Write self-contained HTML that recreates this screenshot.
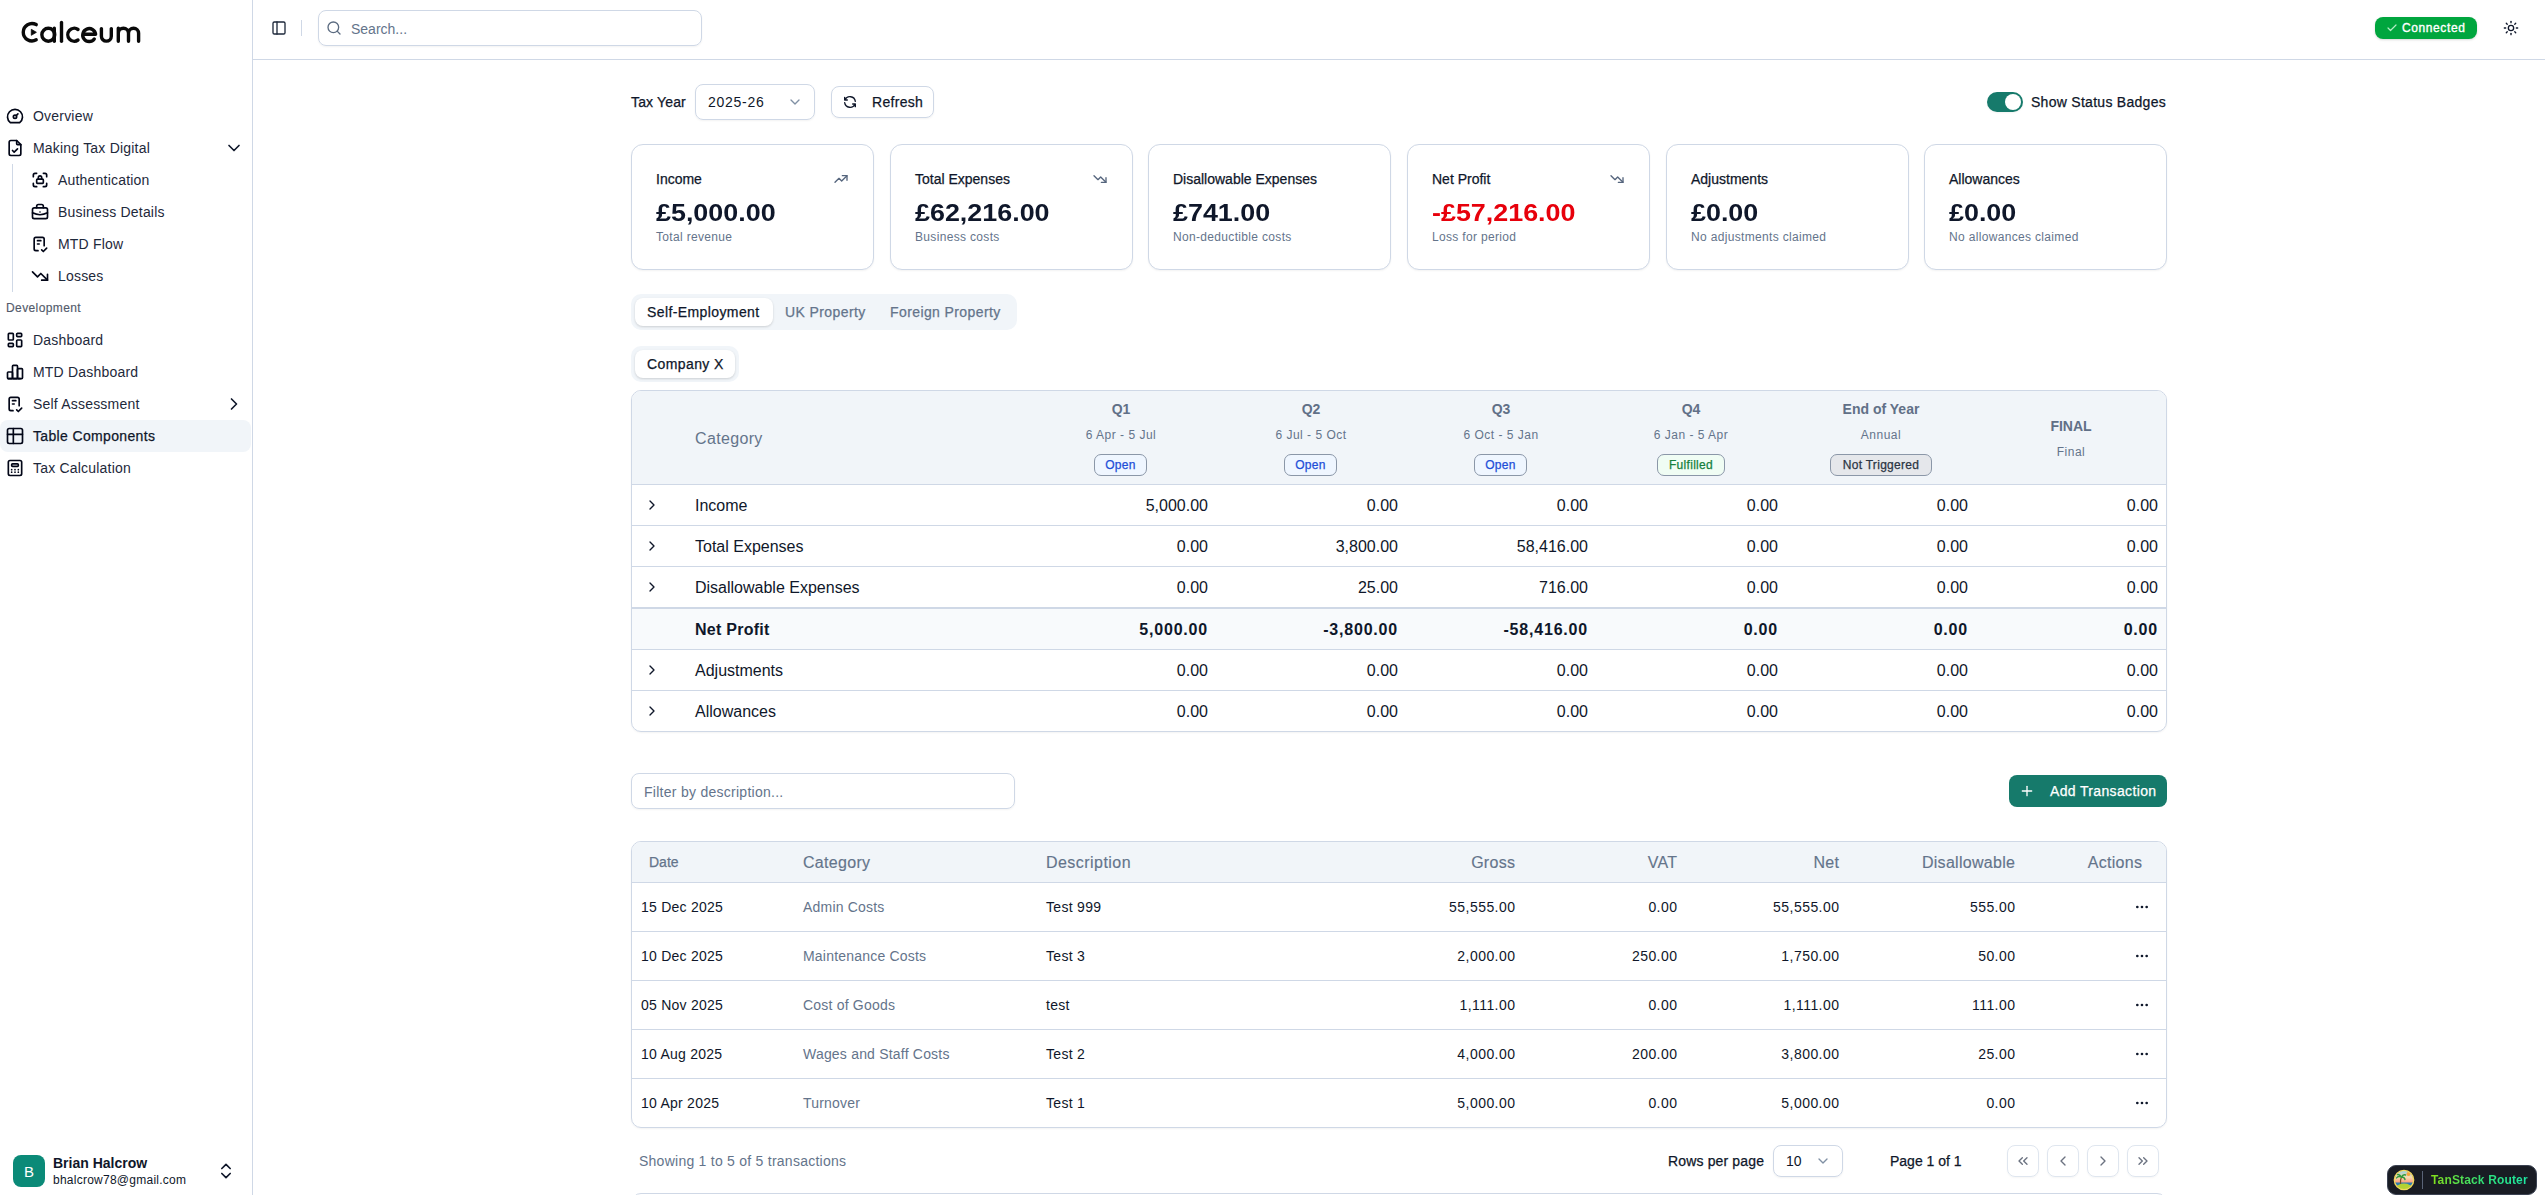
<!DOCTYPE html>
<html><head><meta charset="utf-8"><style>
*{box-sizing:border-box;margin:0;padding:0}
html,body{width:2545px;height:1195px;overflow:hidden;background:#fff;font-family:"Liberation Sans",sans-serif;color:#0f172a}
.abs{position:absolute}
svg{display:block;overflow:visible}
.ic{fill:none;stroke:currentColor;stroke-width:2;stroke-linecap:round;stroke-linejoin:round}
.nw{white-space:nowrap}
.trow .n{letter-spacing:.45px;margin-right:-.45px}
.m{-webkit-text-stroke:.25px currentColor}
.m2{-webkit-text-stroke:.15px currentColor}
#sb{position:absolute;left:0;top:0;width:253px;height:1195px;border-right:1px solid #cfd8e6;background:#fff}
.nav{position:absolute;left:0;width:251px;height:32px;font-size:14px;line-height:32px;color:#1e293b}
.nav .i{position:absolute;left:5px;top:6px;width:20px;height:20px;color:#020617}
.nav .t{position:absolute;left:33px;top:0;letter-spacing:.2px;white-space:nowrap}
.nav.act .t{-webkit-text-stroke:.25px currentColor;letter-spacing:.35px;color:#0f172a}
.sub .i{left:30px}
.sub .t{left:58px}
.nav.act{background:#f1f5f9;border-radius:8px}
#hdr{position:absolute;left:253px;top:0;right:0;height:60px;border-bottom:1px solid #cfd8e6}
.muted{color:#64748b}
.card{position:absolute;top:144px;width:243px;height:126px;border:1px solid #cfd8e6;border-radius:12px;box-shadow:0 1px 2px rgba(0,0,0,.05);background:#fff}
.card .ttl{position:absolute;left:24px;top:24px;font-size:14px;line-height:20px;-webkit-text-stroke:.25px currentColor}
.card .val{position:absolute;left:24px;top:52px;font-size:24px;line-height:32px;font-weight:700;transform:scaleX(1.12);transform-origin:0 0}
.card .sub2{position:absolute;left:24px;top:84px;font-size:12px;line-height:16px;color:#64748b;letter-spacing:.33px}
.card .ar{position:absolute;left:201px;top:26px;width:16px;height:16px;color:#55657d}
.tabs{position:absolute;background:#f1f5f9;border-radius:10px}
.tab{position:absolute;top:4px;height:28px;font-size:14px;line-height:28px;color:#64748b;white-space:nowrap;letter-spacing:.4px;-webkit-text-stroke:.25px currentColor}
.tab.on{background:#fff;color:#0f172a;border-radius:8px;box-shadow:0 1px 3px rgba(0,0,0,.1),0 1px 2px rgba(0,0,0,.06)}
#st{position:absolute;left:631px;top:390px;width:1536px;height:342px;border:1px solid #cfd8e6;border-radius:10px;overflow:hidden;box-shadow:0 1px 2px rgba(0,0,0,.05)}
#st .hd{position:absolute;left:0;top:0;width:100%;height:94px;background:#f1f5f9;border-bottom:1px solid #cfd8e6}
.qh{position:absolute;top:0;width:190px;height:93px;text-align:center;color:#617087}
.qh .q{position:absolute;left:0;width:190px;top:8px;font-size:14px;line-height:20px;font-weight:700}
.qh .d{position:absolute;left:0;width:190px;top:36px;font-size:12px;line-height:16px;letter-spacing:.5px;color:#64748b}
.bdg{position:absolute;top:63px;height:22px;border:1px solid #8b97a8;border-radius:7px;font-size:12px;line-height:20px;font-weight:400;-webkit-text-stroke:.25px currentColor;text-align:center;letter-spacing:.3px}
.row{position:absolute;left:0;width:100%;height:41px;border-bottom:1px solid #cfd8e6;font-size:16px;line-height:40px}
.row .c{position:absolute;left:63px;top:1px;white-space:nowrap}
.row .v{position:absolute;top:1px;width:190px;text-align:right;padding-right:8px}
.row .chev{position:absolute;left:12px;top:12px;width:16px;height:16px;color:#0f172a}
#tt{position:absolute;left:631px;top:841px;width:1536px;height:287px;border:1px solid #cfd8e6;border-radius:10px;overflow:hidden;box-shadow:0 1px 2px rgba(0,0,0,.05)}
#tt .hd{position:absolute;left:0;top:0;width:100%;height:41px;background:#f1f5f9;border-bottom:1px solid #cfd8e6;color:#64748b;font-size:16px;line-height:41px;-webkit-text-stroke:.15px currentColor}
.trow{position:absolute;left:0;width:100%;height:49px;border-bottom:1px solid #cfd8e6;font-size:14px;line-height:48px}
.trow div,#tt .hd div{position:absolute;top:0;white-space:nowrap}
.pbtn{position:absolute;top:1145px;width:32px;height:32px;border:1px solid #dfe6ef;border-radius:8px;box-shadow:0 1px 2px rgba(0,0,0,.04);color:#64748b}
</style></head><body>
<div id="sb">
<svg class="abs" style="left:0;top:0" width="160" height="60" viewBox="0 0 160 60">
<g fill="none" stroke="#0a0a0a" stroke-width="3.4" stroke-linecap="round" stroke-linejoin="round">
<path d="M36.2 24.6 A8.7 8.7 0 1 0 36.2 39.8"/>
<circle cx="48.3" cy="34.75" r="6.45"/>
<path d="M54.3 28.3V41.2"/>
<path d="M61.5 22.4V41.2"/>
<path d="M78 29.5 A6.45 6.45 0 1 0 78 40"/>
<path d="M83.1 34.3H95.6 A6.45 6.45 0 1 0 94.3 39"/>
<path d="M101.4 28.6V36.2 A4.95 4.95 0 0 0 111.3 36.2V28.6"/>
<path d="M118.3 41.2V28.3 M118.3 33.3 A5.1 5.1 0 0 1 128.5 33.3V41.2 M128.5 33.3 A5.05 5.05 0 0 1 138.6 33.3V41.2"/>
</g>
<path d="M31.3 29.3 L36.4 32.3 L31.3 35.3Z" fill="#0a0a0a" stroke="#0a0a0a" stroke-width="0.8" stroke-linejoin="round"/>
</svg>
<div class="nav " style="top:100px"><div class="i"><svg width="100%" height="100%" viewBox="0 0 24 24" class="ic" style="stroke-width:2"><path d="M12 13m-2 0a2 2 0 1 0 4 0a2 2 0 1 0 -4 0"/><path d="M13.45 11.55l2.05 -2.05"/><path d="M6.4 20a9 9 0 1 1 11.2 0z"/></svg></div><div class="t">Overview</div></div>
<div class="nav " style="top:132px"><div class="i"><svg width="100%" height="100%" viewBox="0 0 24 24" class="ic" style="stroke-width:2"><path d="M14 3v4a1 1 0 0 0 1 1h4"/><path d="M17 21h-10a2 2 0 0 1 -2 -2v-14a2 2 0 0 1 2 -2h7l5 5v11a2 2 0 0 1 -2 2z"/><path d="M9 15l2 2l4 -4"/></svg></div><div class="t">Making Tax Digital</div></div>
<div class="nav sub" style="top:164px"><div class="i"><svg width="100%" height="100%" viewBox="0 0 24 24" class="ic" style="stroke-width:2"><path d="M4 8v-2a2 2 0 0 1 2 -2h2"/><path d="M4 16v2a2 2 0 0 0 2 2h2"/><path d="M16 4h2a2 2 0 0 1 2 2v2"/><path d="M16 20h2a2 2 0 0 0 2 -2v-2"/><path d="M8 12a1 1 0 0 1 1 -1h6a1 1 0 0 1 1 1v3a1 1 0 0 1 -1 1h-6a1 1 0 0 1 -1 -1z"/><path d="M10 11v-2a2 2 0 1 1 4 0v2"/></svg></div><div class="t">Authentication</div></div>
<div class="nav sub" style="top:196px"><div class="i"><svg width="100%" height="100%" viewBox="0 0 24 24" class="ic" style="stroke-width:2"><path d="M3 9a2 2 0 0 1 2 -2h14a2 2 0 0 1 2 2v9a2 2 0 0 1 -2 2h-14a2 2 0 0 1 -2 -2z"/><path d="M8 7v-2a2 2 0 0 1 2 -2h4a2 2 0 0 1 2 2v2"/><path d="M12 12l0 .01"/><path d="M3 13a20 20 0 0 0 18 0"/></svg></div><div class="t">Business Details</div></div>
<div class="nav sub" style="top:228px"><div class="i"><svg width="100%" height="100%" viewBox="0 0 24 24" class="ic" style="stroke-width:2"><path d="M9.615 20h-2.615a2 2 0 0 1 -2 -2v-12a2 2 0 0 1 2 -2h8a2 2 0 0 1 2 2v8"/><path d="M14 19l2 2l4 -4"/><path d="M9 8h4"/><path d="M9 12h2"/></svg></div><div class="t">MTD Flow</div></div>
<div class="nav sub" style="top:260px"><div class="i"><svg width="100%" height="100%" viewBox="0 0 24 24" class="ic" style="stroke-width:2"><path d="M3 7l6 6l4 -4l8 8"/><path d="M21 10l0 7l-7 0"/></svg></div><div class="t">Losses</div></div>
<div class="nav " style="top:324px"><div class="i"><svg width="100%" height="100%" viewBox="0 0 24 24" class="ic" style="stroke-width:2"><path d="M5 4h4a1 1 0 0 1 1 1v6a1 1 0 0 1 -1 1h-4a1 1 0 0 1 -1 -1v-6a1 1 0 0 1 1 -1"/><path d="M5 16h4a1 1 0 0 1 1 1v2a1 1 0 0 1 -1 1h-4a1 1 0 0 1 -1 -1v-2a1 1 0 0 1 1 -1"/><path d="M15 12h4a1 1 0 0 1 1 1v6a1 1 0 0 1 -1 1h-4a1 1 0 0 1 -1 -1v-6a1 1 0 0 1 1 -1"/><path d="M15 4h4a1 1 0 0 1 1 1v2a1 1 0 0 1 -1 1h-4a1 1 0 0 1 -1 -1v-2a1 1 0 0 1 1 -1"/></svg></div><div class="t">Dashboard</div></div>
<div class="nav " style="top:356px"><div class="i"><svg width="100%" height="100%" viewBox="0 0 24 24" class="ic" style="stroke-width:2"><path d="M3 13a1 1 0 0 1 1 -1h4a1 1 0 0 1 1 1v6a1 1 0 0 1 -1 1h-4a1 1 0 0 1 -1 -1z"/><path d="M15 9a1 1 0 0 1 1 -1h4a1 1 0 0 1 1 1v10a1 1 0 0 1 -1 1h-4a1 1 0 0 1 -1 -1z"/><path d="M9 5a1 1 0 0 1 1 -1h4a1 1 0 0 1 1 1v14a1 1 0 0 1 -1 1h-4a1 1 0 0 1 -1 -1z"/><path d="M4 20h14"/></svg></div><div class="t">MTD Dashboard</div></div>
<div class="nav " style="top:388px"><div class="i"><svg width="100%" height="100%" viewBox="0 0 24 24" class="ic" style="stroke-width:2"><path d="M9.615 20h-2.615a2 2 0 0 1 -2 -2v-12a2 2 0 0 1 2 -2h8a2 2 0 0 1 2 2v8"/><path d="M14 19l2 2l4 -4"/><path d="M9 8h4"/><path d="M9 12h2"/></svg></div><div class="t">Self Assessment</div></div>
<div class="nav act" style="top:420px"><div class="i"><svg width="100%" height="100%" viewBox="0 0 24 24" class="ic" style="stroke-width:2"><path d="M3 5a2 2 0 0 1 2 -2h14a2 2 0 0 1 2 2v14a2 2 0 0 1 -2 2h-14a2 2 0 0 1 -2 -2v-14z"/><path d="M3 10h18"/><path d="M10 3v18"/></svg></div><div class="t">Table Components</div></div>
<div class="nav " style="top:452px"><div class="i"><svg width="100%" height="100%" viewBox="0 0 24 24" class="ic" style="stroke-width:2"><path d="M4 5a2 2 0 0 1 2 -2h12a2 2 0 0 1 2 2v14a2 2 0 0 1 -2 2h-12a2 2 0 0 1 -2 -2z"/><path d="M8 8a1 1 0 0 1 1 -1h6a1 1 0 0 1 1 1v1a1 1 0 0 1 -1 1h-6a1 1 0 0 1 -1 -1z"/><path d="M8 14l0 .01"/><path d="M12 14l0 .01"/><path d="M16 14l0 .01"/><path d="M8 17l0 .01"/><path d="M12 17l0 .01"/><path d="M16 17l0 .01"/></svg></div><div class="t">Tax Calculation</div></div>
<div class="abs nw m2" style="left:6px;top:300px;font-size:12px;line-height:16px;letter-spacing:.4px;color:#535b6b">Development</div>
<div class="abs" style="left:12px;top:164px;width:1px;height:128px;background:#cfd8e6"></div>
<div class="abs" style="left:224px;top:138px;width:20px;height:20px;color:#0f172a"><svg width="100%" height="100%" viewBox="0 0 24 24" class="ic" style="stroke-width:2"><path d="m6 9 6 6 6-6"/></svg></div>
<div class="abs" style="left:224px;top:394px;width:20px;height:20px;color:#0f172a"><svg width="100%" height="100%" viewBox="0 0 24 24" class="ic" style="stroke-width:2"><path d="m9 18 6-6-6-6"/></svg></div>
<div class="abs" style="left:13px;top:1155px;width:32px;height:32px;border-radius:8px;background:#0b8a78;color:#fff;font-size:15px;line-height:34px;text-align:center">B</div>
<div class="abs nw" style="left:53px;top:1153px;font-size:14px;line-height:20px;font-weight:700">Brian Halcrow</div>
<div class="abs nw" style="left:53px;top:1172px;font-size:12px;line-height:16px;letter-spacing:.25px">bhalcrow78@gmail.com</div>
<div class="abs" style="left:216px;top:1161px;width:20px;height:20px;color:#0f172a"><svg width="100%" height="100%" viewBox="0 0 24 24" class="ic" style="stroke-width:2"><path d="m7 15 5 5 5-5"/><path d="m7 9 5-5 5 5"/></svg></div>
</div>
<div id="hdr"></div>
<div class="abs" style="left:271px;top:20px;width:16px;height:16px;color:#1e293b"><svg width="100%" height="100%" viewBox="0 0 24 24" class="ic" style="stroke-width:2"><rect width="18" height="18" x="3" y="3" rx="2"/><path d="M9 3v18"/></svg></div>
<div class="abs" style="left:301px;top:20px;width:1px;height:16px;background:#cfd8e6"></div>
<div class="abs" style="left:318px;top:10px;width:384px;height:36px;border:1px solid #cfd8e6;border-radius:8px;box-shadow:0 1px 2px rgba(0,0,0,.05)"></div>
<div class="abs" style="left:326px;top:20px;width:16px;height:16px;color:#5b6b80"><svg width="100%" height="100%" viewBox="0 0 24 24" class="ic" style="stroke-width:2"><circle cx="11" cy="11" r="8"/><path d="m21 21-4.3-4.3"/></svg></div>
<div class="abs muted nw" style="left:351px;top:19px;font-size:14px;line-height:20px">Search...</div>
<div class="abs" style="left:2375px;top:17px;width:102px;height:22px;border-radius:8px;background:#00a63e;box-shadow:0 1px 3px rgba(0,0,0,.1),0 1px 2px rgba(0,0,0,.06);color:#fff;font-size:12px;line-height:22px;font-weight:400;-webkit-text-stroke:.35px currentColor;padding-left:27px;letter-spacing:.6px">Connected</div>
<div class="abs" style="left:2386px;top:22px;width:12px;height:12px;color:#b5ebc6"><svg width="100%" height="100%" viewBox="0 0 24 24" class="ic" style="stroke-width:2.4"><path d="M20 6 9 17l-5-5"/></svg></div>
<div class="abs" style="left:2503px;top:20px;width:16px;height:16px;color:#0f172a"><svg width="100%" height="100%" viewBox="0 0 24 24" class="ic" style="stroke-width:2"><circle cx="12" cy="12" r="4"/><path d="M12 2v2"/><path d="M12 20v2"/><path d="m4.93 4.93 1.41 1.41"/><path d="m17.66 17.66 1.41 1.41"/><path d="M2 12h2"/><path d="M20 12h2"/><path d="m6.34 17.66-1.41 1.41"/><path d="m19.07 4.93-1.41 1.41"/></svg></div>
<div class="abs nw m" style="left:631px;top:92px;font-size:14px;line-height:20px;letter-spacing:.15px">Tax Year</div>
<div class="abs" style="left:695px;top:84px;width:120px;height:36px;border:1px solid #cfd8e6;border-radius:8px;box-shadow:0 1px 2px rgba(0,0,0,.05);font-size:14px;line-height:34px;padding-left:12px;letter-spacing:.72px">2025-26</div>
<div class="abs" style="left:787px;top:94px;width:16px;height:16px;color:#8090a4"><svg width="100%" height="100%" viewBox="0 0 24 24" class="ic" style="stroke-width:2"><path d="m6 9 6 6 6-6"/></svg></div>
<div class="abs" style="left:831px;top:86px;width:103px;height:32px;border:1px solid #cfd8e6;border-radius:8px;box-shadow:0 1px 2px rgba(0,0,0,.05);font-size:14px;line-height:30px;padding-left:40px;letter-spacing:.3px;-webkit-text-stroke:.25px currentColor">Refresh</div>
<div class="abs" style="left:842px;top:94px;width:16px;height:16px;color:#0f172a"><svg width="100%" height="100%" viewBox="0 0 24 24" class="ic" style="stroke-width:2"><path d="M20 11a8.1 8.1 0 0 0 -15.5 -2m-.5 -4v4h4"/><path d="M4 13a8.1 8.1 0 0 0 15.5 2m.5 4v-4h-4"/></svg></div>
<div class="abs" style="left:1987px;top:92px;width:36px;height:20px;border-radius:10px;background:#167a6b;box-shadow:0 1px 2px rgba(0,0,0,.05)"><div class="abs" style="left:18px;top:2px;width:16px;height:16px;border-radius:8px;background:#fff"></div></div>
<div class="abs nw m" style="left:2031px;top:92px;font-size:14px;line-height:20px;letter-spacing:.28px">Show Status Badges</div>
<div class="card" style="left:631px"><div class="ttl nw">Income</div><div class="val nw">£5,000.00</div><div class="sub2 nw">Total revenue</div><div class="ar"><svg width="100%" height="100%" viewBox="0 0 24 24" class="ic" style="stroke-width:2"><path d="M3 17l6 -6l4 4l8 -8"/><path d="M14 7l7 0l0 7"/></svg></div></div>
<div class="card" style="left:890px"><div class="ttl nw">Total Expenses</div><div class="val nw">£62,216.00</div><div class="sub2 nw">Business costs</div><div class="ar"><svg width="100%" height="100%" viewBox="0 0 24 24" class="ic" style="stroke-width:2"><path d="M3 7l6 6l4 -4l8 8"/><path d="M21 10l0 7l-7 0"/></svg></div></div>
<div class="card" style="left:1148px"><div class="ttl nw">Disallowable Expenses</div><div class="val nw">£741.00</div><div class="sub2 nw">Non-deductible costs</div></div>
<div class="card" style="left:1407px"><div class="ttl nw">Net Profit</div><div class="val nw" style="color:#e7000b">-£57,216.00</div><div class="sub2 nw">Loss for period</div><div class="ar"><svg width="100%" height="100%" viewBox="0 0 24 24" class="ic" style="stroke-width:2"><path d="M3 7l6 6l4 -4l8 8"/><path d="M21 10l0 7l-7 0"/></svg></div></div>
<div class="card" style="left:1666px"><div class="ttl nw">Adjustments</div><div class="val nw">£0.00</div><div class="sub2 nw">No adjustments claimed</div></div>
<div class="card" style="left:1924px"><div class="ttl nw">Allowances</div><div class="val nw">£0.00</div><div class="sub2 nw">No allowances claimed</div></div>
<div class="tabs" style="left:631px;top:294px;width:386px;height:36px">
<div class="tab on" style="left:4px;width:138px;padding-left:12px">Self-Employment</div>
<div class="tab" style="left:154px">UK Property</div>
<div class="tab" style="left:259px">Foreign Property</div>
</div>
<div class="tabs" style="left:631px;top:346px;width:108px;height:36px">
<div class="tab on" style="left:4px;width:100px;padding-left:12px">Company X</div>
</div>
<div id="st"><div class="hd">
<div class="abs" style="left:63px;top:38px;font-size:16px;line-height:20px;color:#64748b;letter-spacing:.35px">Category</div>
<div class="qh" style="left:394px"><div class="q">Q1</div><div class="d">6 Apr - 5 Jul</div><div class="bdg" style="left:68px;width:53px;background:#eff6ff;color:#1d4ed8">Open</div></div>
<div class="qh" style="left:584px"><div class="q">Q2</div><div class="d">6 Jul - 5 Oct</div><div class="bdg" style="left:68px;width:53px;background:#eff6ff;color:#1d4ed8">Open</div></div>
<div class="qh" style="left:774px"><div class="q">Q3</div><div class="d">6 Oct - 5 Jan</div><div class="bdg" style="left:68px;width:53px;background:#eff6ff;color:#1d4ed8">Open</div></div>
<div class="qh" style="left:964px"><div class="q">Q4</div><div class="d">6 Jan - 5 Apr</div><div class="bdg" style="left:61px;width:68px;background:#f0fdf4;color:#15803d">Fulfilled</div></div>
<div class="qh" style="left:1154px"><div class="q">End of Year</div><div class="d">Annual</div><div class="bdg" style="left:44px;width:102px;background:#e5e7eb;color:#2b3544">Not Triggered</div></div>
<div class="qh" style="left:1344px"><div class="q" style="top:25px">FINAL</div><div class="d" style="top:53px">Final</div></div>
</div>
<div class="row" style="top:94px">
<div class="chev"><svg width="100%" height="100%" viewBox="0 0 24 24" class="ic" style="stroke-width:2"><path d="m9 18 6-6-6-6"/></svg></div><div class="c">Income</div>
<div class="v" style="left:394px">5,000.00</div>
<div class="v" style="left:584px">0.00</div>
<div class="v" style="left:774px">0.00</div>
<div class="v" style="left:964px">0.00</div>
<div class="v" style="left:1154px">0.00</div>
<div class="v" style="left:1344px">0.00</div>
</div>
<div class="row" style="top:135px">
<div class="chev"><svg width="100%" height="100%" viewBox="0 0 24 24" class="ic" style="stroke-width:2"><path d="m9 18 6-6-6-6"/></svg></div><div class="c">Total Expenses</div>
<div class="v" style="left:394px">0.00</div>
<div class="v" style="left:584px">3,800.00</div>
<div class="v" style="left:774px">58,416.00</div>
<div class="v" style="left:964px">0.00</div>
<div class="v" style="left:1154px">0.00</div>
<div class="v" style="left:1344px">0.00</div>
</div>
<div class="row" style="top:176px">
<div class="chev"><svg width="100%" height="100%" viewBox="0 0 24 24" class="ic" style="stroke-width:2"><path d="m9 18 6-6-6-6"/></svg></div><div class="c">Disallowable Expenses</div>
<div class="v" style="left:394px">0.00</div>
<div class="v" style="left:584px">25.00</div>
<div class="v" style="left:774px">716.00</div>
<div class="v" style="left:964px">0.00</div>
<div class="v" style="left:1154px">0.00</div>
<div class="v" style="left:1344px">0.00</div>
</div>
<div class="row" style="top:217px;height:42px;background:#f8fafc;font-weight:700;border-top:1px solid #cfd8e6">
<div class="c" style="letter-spacing:.25px">Net Profit</div>
<div class="v" style="left:394px;letter-spacing:.8px">5,000.00</div>
<div class="v" style="left:584px;letter-spacing:.8px">-3,800.00</div>
<div class="v" style="left:774px;letter-spacing:.8px">-58,416.00</div>
<div class="v" style="left:964px;letter-spacing:.8px">0.00</div>
<div class="v" style="left:1154px;letter-spacing:.8px">0.00</div>
<div class="v" style="left:1344px;letter-spacing:.8px">0.00</div>
</div>
<div class="row" style="top:259px">
<div class="chev"><svg width="100%" height="100%" viewBox="0 0 24 24" class="ic" style="stroke-width:2"><path d="m9 18 6-6-6-6"/></svg></div><div class="c">Adjustments</div>
<div class="v" style="left:394px">0.00</div>
<div class="v" style="left:584px">0.00</div>
<div class="v" style="left:774px">0.00</div>
<div class="v" style="left:964px">0.00</div>
<div class="v" style="left:1154px">0.00</div>
<div class="v" style="left:1344px">0.00</div>
</div>
<div class="row" style="top:300px">
<div class="chev"><svg width="100%" height="100%" viewBox="0 0 24 24" class="ic" style="stroke-width:2"><path d="m9 18 6-6-6-6"/></svg></div><div class="c">Allowances</div>
<div class="v" style="left:394px">0.00</div>
<div class="v" style="left:584px">0.00</div>
<div class="v" style="left:774px">0.00</div>
<div class="v" style="left:964px">0.00</div>
<div class="v" style="left:1154px">0.00</div>
<div class="v" style="left:1344px">0.00</div>
</div>
</div>
<div class="abs" style="left:631px;top:773px;width:384px;height:36px;border:1px solid #cfd8e6;border-radius:8px;box-shadow:0 1px 2px rgba(0,0,0,.05);font-size:14px;line-height:34px;padding:1px 0 0 12px;color:#64748b;letter-spacing:.27px">Filter by description...</div>
<div class="abs" style="left:2009px;top:775px;width:158px;height:32px;border-radius:8px;background:#167a6b;color:#fff;font-size:14px;line-height:32px;padding-left:41px;letter-spacing:.35px;-webkit-text-stroke:.25px currentColor">Add Transaction</div>
<div class="abs" style="left:2019px;top:783px;width:16px;height:16px;color:#fff"><svg width="100%" height="100%" viewBox="0 0 24 24" class="ic" style="stroke-width:2"><path d="M5 12h14"/><path d="M12 5v14"/></svg></div>
<div id="tt"><div class="hd">
<div class="m" style="left:17px;font-size:14px">Date</div>
<div style="left:171px;letter-spacing:.3px">Category</div>
<div style="left:414px;letter-spacing:.45px">Description</div>
<div style="right:651px;letter-spacing:.3px;margin-right:-.3px">Gross</div>
<div style="right:489px;letter-spacing:.3px;margin-right:-.3px">VAT</div>
<div style="right:327px;letter-spacing:.3px;margin-right:-.3px">Net</div>
<div style="right:151px;letter-spacing:.3px;margin-right:-.3px">Disallowable</div>
<div style="right:24px;letter-spacing:.3px;margin-right:-.3px">Actions</div>
</div>
<div class="trow" style="top:41px"><div style="left:9px;letter-spacing:.25px">15 Dec 2025</div><div style="left:171px;color:#64748b;letter-spacing:.2px">Admin Costs</div><div style="left:414px;letter-spacing:.3px">Test 999</div><div class="n" style="right:651px">55,555.00</div><div class="n" style="right:489px">0.00</div><div class="n" style="right:327px">55,555.00</div><div class="n" style="right:151px">555.00</div><div style="left:1502px;top:16px;width:16px;height:16px"><svg width="100%" height="100%" viewBox="0 0 24 24" class="ic" style="stroke-width:2"><circle cx="12" cy="12" r="1"/><circle cx="19" cy="12" r="1"/><circle cx="5" cy="12" r="1"/></svg></div></div>
<div class="trow" style="top:90px"><div style="left:9px;letter-spacing:.25px">10 Dec 2025</div><div style="left:171px;color:#64748b;letter-spacing:.2px">Maintenance Costs</div><div style="left:414px;letter-spacing:.3px">Test 3</div><div class="n" style="right:651px">2,000.00</div><div class="n" style="right:489px">250.00</div><div class="n" style="right:327px">1,750.00</div><div class="n" style="right:151px">50.00</div><div style="left:1502px;top:16px;width:16px;height:16px"><svg width="100%" height="100%" viewBox="0 0 24 24" class="ic" style="stroke-width:2"><circle cx="12" cy="12" r="1"/><circle cx="19" cy="12" r="1"/><circle cx="5" cy="12" r="1"/></svg></div></div>
<div class="trow" style="top:139px"><div style="left:9px;letter-spacing:.25px">05 Nov 2025</div><div style="left:171px;color:#64748b;letter-spacing:.2px">Cost of Goods</div><div style="left:414px;letter-spacing:.3px">test</div><div class="n" style="right:651px">1,111.00</div><div class="n" style="right:489px">0.00</div><div class="n" style="right:327px">1,111.00</div><div class="n" style="right:151px">111.00</div><div style="left:1502px;top:16px;width:16px;height:16px"><svg width="100%" height="100%" viewBox="0 0 24 24" class="ic" style="stroke-width:2"><circle cx="12" cy="12" r="1"/><circle cx="19" cy="12" r="1"/><circle cx="5" cy="12" r="1"/></svg></div></div>
<div class="trow" style="top:188px"><div style="left:9px;letter-spacing:.25px">10 Aug 2025</div><div style="left:171px;color:#64748b;letter-spacing:.2px">Wages and Staff Costs</div><div style="left:414px;letter-spacing:.3px">Test 2</div><div class="n" style="right:651px">4,000.00</div><div class="n" style="right:489px">200.00</div><div class="n" style="right:327px">3,800.00</div><div class="n" style="right:151px">25.00</div><div style="left:1502px;top:16px;width:16px;height:16px"><svg width="100%" height="100%" viewBox="0 0 24 24" class="ic" style="stroke-width:2"><circle cx="12" cy="12" r="1"/><circle cx="19" cy="12" r="1"/><circle cx="5" cy="12" r="1"/></svg></div></div>
<div class="trow" style="top:237px"><div style="left:9px;letter-spacing:.25px">10 Apr 2025</div><div style="left:171px;color:#64748b;letter-spacing:.2px">Turnover</div><div style="left:414px;letter-spacing:.3px">Test 1</div><div class="n" style="right:651px">5,000.00</div><div class="n" style="right:489px">0.00</div><div class="n" style="right:327px">5,000.00</div><div class="n" style="right:151px">0.00</div><div style="left:1502px;top:16px;width:16px;height:16px"><svg width="100%" height="100%" viewBox="0 0 24 24" class="ic" style="stroke-width:2"><circle cx="12" cy="12" r="1"/><circle cx="19" cy="12" r="1"/><circle cx="5" cy="12" r="1"/></svg></div></div>
</div>
<div class="abs muted nw" style="left:639px;top:1151px;font-size:14px;line-height:20px;letter-spacing:.25px">Showing 1 to 5 of 5 transactions</div>
<div class="abs nw m" style="left:1668px;top:1151px;font-size:14px;line-height:20px;letter-spacing:.15px">Rows per page</div>
<div class="abs" style="left:1773px;top:1145px;width:70px;height:32px;border:1px solid #cfd8e6;border-radius:8px;box-shadow:0 1px 2px rgba(0,0,0,.05);font-size:14px;line-height:30px;padding-left:12px">10</div>
<div class="abs" style="left:1815px;top:1153px;width:16px;height:16px;color:#8090a4"><svg width="100%" height="100%" viewBox="0 0 24 24" class="ic" style="stroke-width:2"><path d="m6 9 6 6 6-6"/></svg></div>
<div class="abs nw m" style="left:1890px;top:1151px;font-size:14px;line-height:20px">Page 1 of 1</div>
<div class="pbtn" style="left:2007px"><div class="abs" style="left:7px;top:7px;width:16px;height:16px;color:#6b7280"><svg width="100%" height="100%" viewBox="0 0 24 24" class="ic" style="stroke-width:2"><path d="m11 17-5-5 5-5"/><path d="m18 17-5-5 5-5"/></svg></div></div>
<div class="pbtn" style="left:2047px"><div class="abs" style="left:7px;top:7px;width:16px;height:16px;color:#6b7280"><svg width="100%" height="100%" viewBox="0 0 24 24" class="ic" style="stroke-width:2"><path d="m15 18-6-6 6-6"/></svg></div></div>
<div class="pbtn" style="left:2087px"><div class="abs" style="left:7px;top:7px;width:16px;height:16px;color:#6b7280"><svg width="100%" height="100%" viewBox="0 0 24 24" class="ic" style="stroke-width:2"><path d="m9 18 6-6-6-6"/></svg></div></div>
<div class="pbtn" style="left:2127px"><div class="abs" style="left:7px;top:7px;width:16px;height:16px;color:#6b7280"><svg width="100%" height="100%" viewBox="0 0 24 24" class="ic" style="stroke-width:2"><path d="m6 17 5-5-5-5"/><path d="m13 17 5-5-5-5"/></svg></div></div>
<div class="abs" style="left:631px;top:1193px;width:1536px;height:100px;border:1px solid #cfd8e6;border-radius:10px"></div>
<div class="abs" style="left:2387px;top:1165px;width:150px;height:30px;background:#191c24;border:1px solid #3b4252;border-radius:9px"></div>
<svg class="abs" style="left:2393px;top:1169px" width="22" height="22" viewBox="0 0 22 22"><defs><linearGradient id="sky" x1="0" y1="0" x2="0" y2="1"><stop offset="0" stop-color="#7fd0f0"/><stop offset=".38" stop-color="#f7d9ae"/><stop offset=".62" stop-color="#fb9a7c"/></linearGradient><clipPath id="cc"><circle cx="11" cy="11" r="9.5"/></clipPath></defs><g clip-path="url(#cc)"><rect width="22" height="22" fill="url(#sky)"/><rect y="13.5" width="22" height="3" fill="#2b7fb0"/><ellipse cx="11" cy="19.5" rx="8" ry="5" fill="#b3d232"/><circle cx="15.5" cy="5" r="2" fill="#f8a23a"/><path d="M7.5 15 Q7 11 8.5 8" stroke="#7a4a22" stroke-width="1.2" fill="none"/><path d="M8.5 8 Q5 6.5 3.5 9 M8.5 8 Q6.5 5 4.5 5.5 M8.5 8 Q10 5 12.5 6 M8.5 8 Q11.5 8 12 10.5" stroke="#2f9a3a" stroke-width="1.4" fill="none" stroke-linecap="round"/></g><circle cx="11" cy="11" r="9.7" fill="none" stroke="#f2d95c" stroke-width="1.3"/></svg>
<div class="abs" style="left:2422px;top:1171px;width:1px;height:18px;background:#5a6478"></div>
<div class="abs nw" style="left:2431px;top:1172px;font-size:12px;line-height:16px;font-weight:700;letter-spacing:.15px;background:linear-gradient(90deg,#84e01a,#2ee07a 55%,#1ee9a4);-webkit-background-clip:text;background-clip:text;color:transparent">TanStack Router</div>
</body></html>
